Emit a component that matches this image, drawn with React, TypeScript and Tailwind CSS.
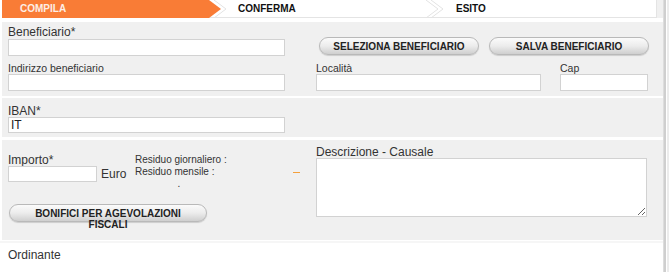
import React from "react";

const btn =
  "rounded-full border border-[#b9b9b9] bg-linear-to-b from-[#fbfbfb] via-[#ececec] to-[#cfcfcf] shadow-[0_1px_1px_rgba(0,0,0,0.15)] text-[10px] font-bold text-[#222] leading-[11px]";
const input = "block bg-white border border-[#d2d2d2]";

export default function App() {
  return (
    <div className="w-[669px] h-[272px] overflow-hidden bg-white flex font-['Liberation_Sans',Arial,sans-serif] text-[#333]">
      <div className="w-[663px] flex flex-col">
        {/* tab bar */}
        <div className="flex h-[18px]">
          <div className="relative ml-[2px] w-[655px] h-[18px] border-r border-b border-[#e4e4e4] flex">
            <svg className="absolute inset-0" width="655" height="18" viewBox="0 0 655 18">
              <polyline points="212,0 224,9 212,18" fill="none" stroke="#e3e3e3" strokeWidth="1" />
              <polygon points="0,0 207,0 219,9 207,18 0,18" fill="#f97c36" />
              <polyline points="424,0 436,9 424,18" fill="none" stroke="#e3e3e3" strokeWidth="1" />
              <polyline points="429,0 441,9 429,18" fill="none" stroke="#e3e3e3" strokeWidth="1" />
            </svg>
            <div className="relative w-[218px] pl-[18px] text-[10px] font-bold leading-[18px] text-[#fdeee5]">COMPILA</div>
            <div className="relative w-[218px] pl-[18px] text-[10px] font-bold leading-[18px] text-[#111]">CONFERMA</div>
            <div className="relative w-[218px] pl-[18px] text-[10px] font-bold leading-[18px] text-[#111]">ESITO</div>
          </div>
          <div className="flex-1 bg-[#f0f0f0]" />
        </div>
        <div className="h-[4px]" />

        {/* panel 1 */}
        <div className="ml-[2px] h-[74px] bg-[#f0f0f0] px-[6px] pt-[4px]">
          <div className="flex">
            <div className="w-[277px]">
              <div className="text-[12px] leading-[13px]">Beneficiario*</div>
              <div className={input + " w-[277px] h-[17px]"} />
            </div>
            <div className={btn + " ml-[34px] mt-[11px] w-[160px] h-[18px] flex items-center justify-center"}>SELEZIONA BENEFICIARIO</div>
            <div className={btn + " ml-[10px] mt-[11px] w-[160px] h-[18px] flex items-center justify-center"}>SALVA BENEFICIARIO</div>
          </div>
          <div className="flex mt-[6px]">
            <div className="w-[277px]">
              <div className="text-[10.5px] leading-[12px]">Indirizzo beneficiario</div>
              <div className={input + " w-[277px] h-[17px]"} />
            </div>
            <div className="w-[225px] ml-[31px]">
              <div className="text-[10.5px] leading-[12px]">Località</div>
              <div className={input + " w-[225px] h-[17px]"} />
            </div>
            <div className="w-[88px] ml-[19px]">
              <div className="text-[10.5px] leading-[12px]">Cap</div>
              <div className={input + " w-[88px] h-[17px]"} />
            </div>
          </div>
        </div>
        <div className="h-[2px]" />

        {/* panel 2 */}
        <div className="ml-[2px] h-[39px] bg-[#f0f0f0] px-[6px] pt-[7px]">
          <div className="text-[12px] leading-[12px]">IBAN*</div>
          <div className={input + " w-[277px] h-[16px] text-[12px] leading-[14px] pl-[2px] text-[#222]"}>IT</div>
        </div>
        <div className="h-[3px]" />

        {/* panel 3 */}
        <div className="ml-[2px] h-[100px] bg-[#f0f0f0] pl-[6px] flex">
          <div className="w-[308px] flex flex-col">
            <div className="h-[64px] flex items-start">
              <div className="w-[127px] shrink-0 mt-[15px]">
                <div className="text-[12px] leading-[11px]">Importo*</div>
                <div className="flex">
                  <div className={input + " w-[89px] h-[16px]"} />
                  <div className="ml-[4px] text-[12px] leading-[16px]">Euro</div>
                </div>
              </div>
              <div className="w-[88px] shrink-0 mt-[14px] text-[10px] leading-[12px] whitespace-nowrap">
                <div>Residuo giornaliero :</div>
                <div>Residuo mensile :</div>
                <div className="text-center">.</div>
              </div>
              <div className="ml-[70px] mt-[32px] w-[7px] h-[1px] bg-[#f4a03c] shrink-0" />
            </div>
            <div className={btn + " ml-[1px] w-[198px] h-[18px] px-[20px] pt-[3px] text-center"}>
              BONIFICI PER AGEVOLAZIONI FISCALI
            </div>
          </div>
          <div className="pt-[6px]">
            <div className="text-[12px] leading-[12px]">Descrizione - Causale</div>
            <textarea className="block w-[331px] h-[59px] bg-white border border-[#d2d2d2] resize" />
          </div>
        </div>

        {/* ordinante */}
        <div className="mt-[1px] border-t-[2px] border-[#f6f6f6] flex-1 px-[8px] pt-[5px]">
          <div className="text-[12px] leading-[14px]">Ordinante</div>
        </div>
      </div>
      <div className="w-[6px] h-full flex">
        <div className="w-[1px] bg-[#dddddd]" />
        <div className="w-[2px] bg-[#cfcfcf]" />
        <div className="w-[1px] bg-white" />
        <div className="flex-1 bg-[#ececec]" />
      </div>
    </div>
  );
}
